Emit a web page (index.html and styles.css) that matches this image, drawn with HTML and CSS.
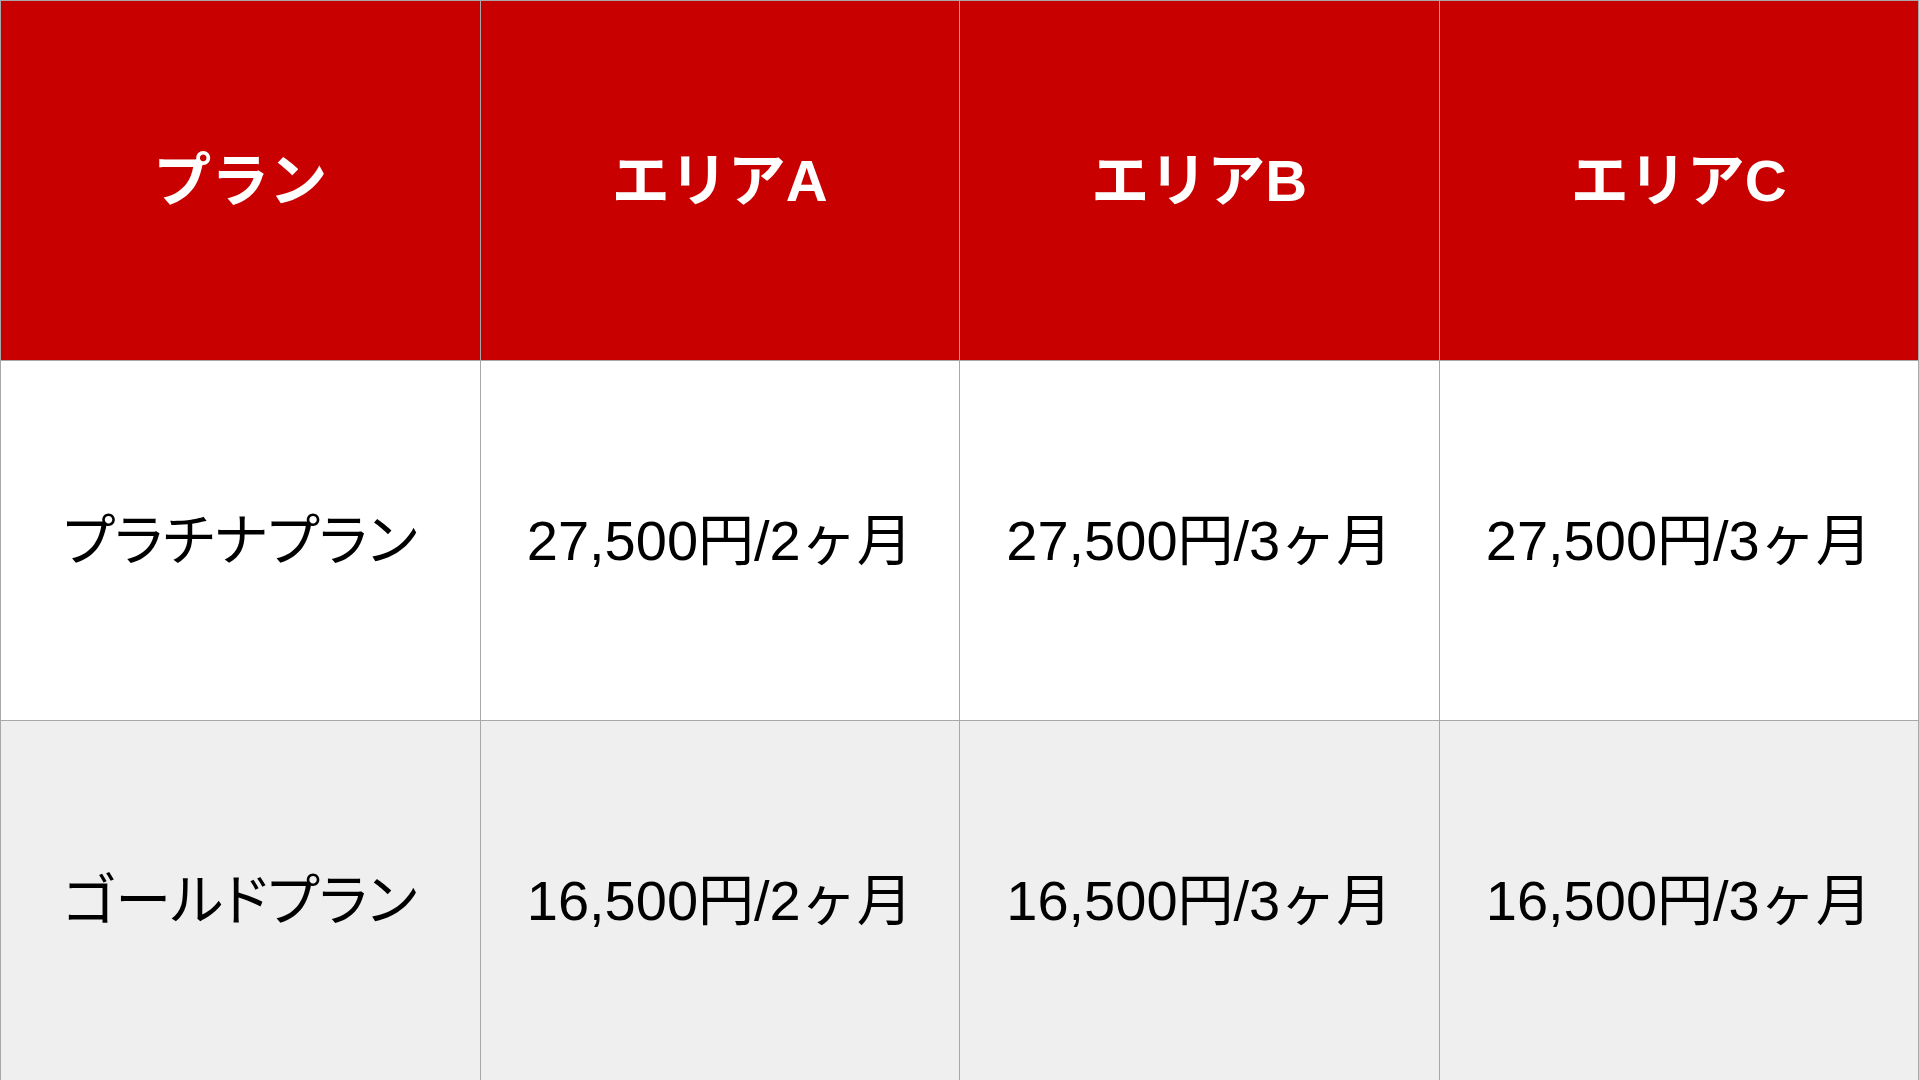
FILE: index.html
```html
<!DOCTYPE html>
<html lang="ja">
<head>
<meta charset="utf-8">
<title>プラン料金表</title>
<link rel="stylesheet" href="styles.css">
</head>
<body>
<table class="price-table">
  <thead>
    <tr class="head-row">
      <th>プラン</th>
      <th>エリアA</th>
      <th>エリアB</th>
      <th>エリアC</th>
    </tr>
  </thead>
  <tbody>
    <tr class="row-white">
      <td class="plan">プラチナプラン</td>
      <td>27,500円/2ヶ月</td>
      <td>27,500円/3ヶ月</td>
      <td>27,500円/3ヶ月</td>
    </tr>
    <tr class="row-gray">
      <td class="plan">ゴールドプラン</td>
      <td>16,500円/2ヶ月</td>
      <td>16,500円/3ヶ月</td>
      <td>16,500円/3ヶ月</td>
    </tr>
  </tbody>
</table>
</body>
</html>
```
FILE: styles.css
```css
html, body {
  margin: 0;
  padding: 0;
  background: #ffffff;
}

body {
  width: 1919px;
  height: 1080px;
  overflow: hidden;
  font-family: "Liberation Sans", "Noto Sans CJK JP", sans-serif;
}

.price-table {
  width: 1919px;
  height: 1080px;
  border-collapse: collapse;
  table-layout: fixed;
}

.price-table th,
.price-table td {
  border: 1px solid #a8a8a8;
  text-align: center;
  vertical-align: middle;
  padding: 0;
  height: 359px;
  font-size: 56px;
  line-height: 1;
  color: #000000;
}

.head-row th {
  background: #c80000;
  color: #ffffff;
  font-weight: 700;
  font-size: 58px;
}

.row-white td {
  background: #ffffff;
  font-weight: 400;
}

.row-gray td {
  background: #efefef;
  font-weight: 400;
}

.price-table td.plan {
  font-size: 56px;
  font-feature-settings: "palt" 1;
}
```
